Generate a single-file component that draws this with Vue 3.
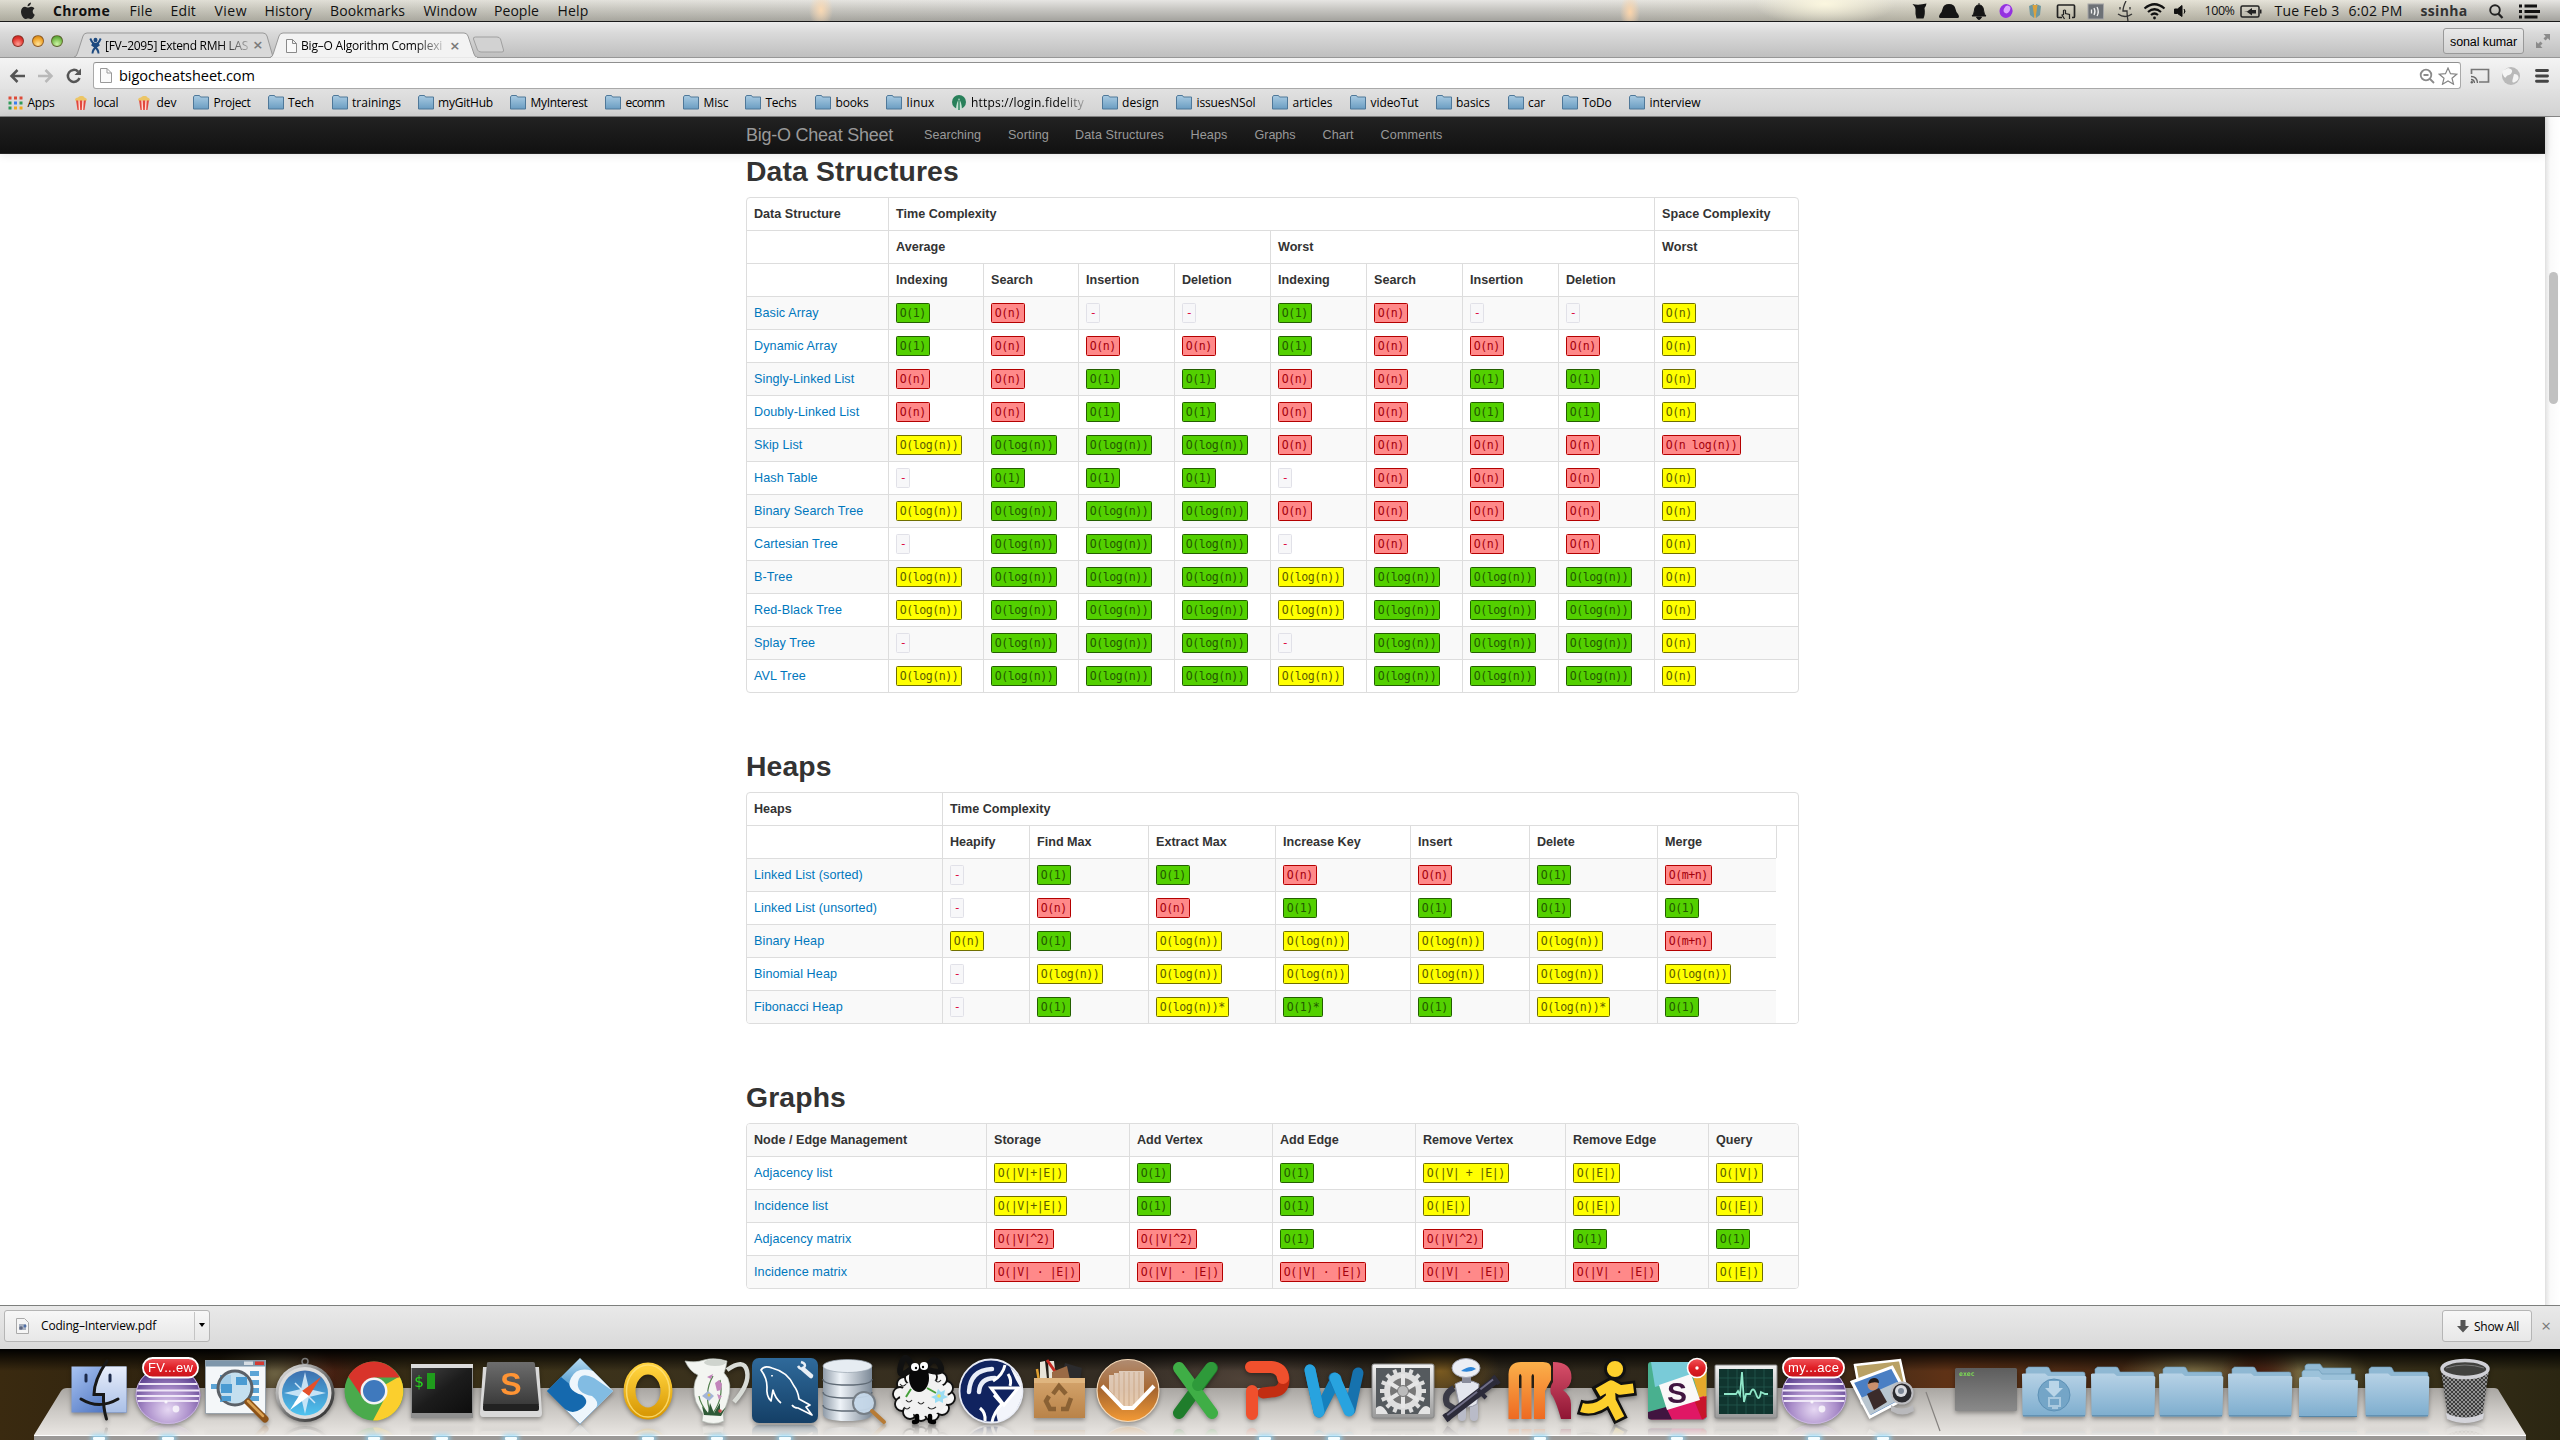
<script setup>
// Spreads letter spacing so that a label takes exactly the given width.
const vFit = {
  mounted(el, { value }) {
    if (!value) return
    const w = el.getBoundingClientRect().width
    el.style.letterSpacing = (value - w) / el.textContent.length + 'px'
  }
}

// Each item starts at x; its slot runs to the start of the next one.
const slots = (items, end) =>
  items.map(([kind, x, w, label], i) => ({
    kind, w, label, slot: (i + 1 < items.length ? items[i + 1][1] : end) - x
  }))

const menus = slots([
  ['b', 53.5, 57, 'Chrome'], ['', 130, 23, 'File'], ['', 171, 25.5, 'Edit'], ['', 215, 32.5, 'View'],
  ['', 265, 47.5, 'History'], ['', 330.5, 75, 'Bookmarks'], ['', 424, 53.5, 'Window'],
  ['', 494.5, 45, 'People'], ['', 558, 31, 'Help']
], 640)

const bookmarks = slots([
  ['apps', 8, 27, 'Apps'], ['pop', 73, 25, 'local'], ['pop', 136, 20, 'dev'],
  ['dir', 193, 37, 'Project'], ['dir', 267.5, 26, 'Tech'], ['dir', 331.5, 49, 'trainings'],
  ['dir', 417.5, 55, 'myGitHub'], ['dir', 510, 57, 'MyInterest'], ['dir', 605, 39, 'ecomm'],
  ['dir', 683, 25, 'Misc'], ['dir', 745, 31, 'Techs'], ['dir', 815, 33, 'books'],
  ['dir', 886, 28, 'linux'], ['fid', 950.5, 113, 'https://login.fidelity'], ['dir', 1101.5, 37, 'design'],
  ['dir', 1176, 59, 'issuesNSol'], ['dir', 1272, 40, 'articles'], ['dir', 1350, 48, 'videoTut'],
  ['dir', 1435.5, 34, 'basics'], ['dir', 1507.5, 17, 'car'], ['dir', 1562, 29, 'ToDo'],
  ['dir', 1629, 51, 'interview']
], 1710)

const links = slots([
  ['', 924, 57, 'Searching'], ['', 1008, 41, 'Sorting'], ['', 1075, 89, 'Data Structures'],
  ['', 1190.5, 37, 'Heaps'], ['', 1254.5, 41, 'Graphs'], ['', 1322.5, 31, 'Chart'], ['', 1380.5, 62, 'Comments']
], 1460)

const text = { g: 'O(1)', r: 'O(n)', l: 'O(log(n))', L: 'O(log(n))', y: 'O(n)' }
const tone = { g: 'green', r: 'red', l: 'green', L: 'yellow', y: 'yellow' }
const cell = c => {
  if (c === '-') return { tone: 'plain', text: '-' }
  if (c.length === 1) return { tone: tone[c], text: text[c] }
  return { tone: tone[c[0]], text: c.slice(1) }
}
const rows = list => list.map(([name, codes]) => ({ name, cells: codes.split(';').map(cell) }))

const structures = rows([
  ['Basic Array', 'g;r;-;-;g;r;-;-;y'],
  ['Dynamic Array', 'g;r;r;r;g;r;r;r;y'],
  ['Singly-Linked List', 'r;r;g;g;r;r;g;g;y'],
  ['Doubly-Linked List', 'r;r;g;g;r;r;g;g;y'],
  ['Skip List', 'L;l;l;l;r;r;r;r;rO(n log(n))'],
  ['Hash Table', '-;g;g;g;-;r;r;r;y'],
  ['Binary Search Tree', 'L;l;l;l;r;r;r;r;y'],
  ['Cartesian Tree', '-;l;l;l;-;r;r;r;y'],
  ['B-Tree', 'L;l;l;l;L;l;l;l;y'],
  ['Red-Black Tree', 'L;l;l;l;L;l;l;l;y'],
  ['Splay Tree', '-;l;l;l;-;l;l;l;y'],
  ['AVL Tree', 'L;l;l;l;L;l;l;l;y']
])
const heaps = rows([
  ['Linked List (sorted)', '-;g;g;r;r;g;rO(m+n)'],
  ['Linked List (unsorted)', '-;r;r;g;g;g;g'],
  ['Binary Heap', 'y;g;L;L;L;L;rO(m+n)'],
  ['Binomial Heap', '-;L;L;L;L;L;L'],
  ['Fibonacci Heap', '-;g;yO(log(n))*;gO(1)*;g;yO(log(n))*;g']
])
const graphs = rows([
  ['Adjacency list', 'yO(|V|+|E|);g;g;yO(|V| + |E|);yO(|E|);yO(|V|)'],
  ['Incidence list', 'yO(|V|+|E|);g;g;yO(|E|);yO(|E|);yO(|E|)'],
  ['Adjacency matrix', 'rO(|V|^2);rO(|V|^2);g;rO(|V|^2);g;g'],
  ['Incidence matrix', 'rO(|V| · |E|);rO(|V| · |E|);rO(|V| · |E|);rO(|V| · |E|);rO(|V| · |E|);yO(|E|)']
])
const colsA = [141, 95, 95, 96, 96, 96, 96, 96, 96, 144]
const colsB = [195, 87, 119, 127, 135, 119, 128, 119, 22]
const colsC = [239, 143, 143, 143, 150, 143, 90]
const ops = ['Indexing', 'Search', 'Insertion', 'Deletion']
const heapOps = ['Heapify', 'Find Max', 'Extract Max', 'Increase Key', 'Insert', 'Delete', 'Merge']
const graphOps = ['Node / Edge Management', 'Storage', 'Add Vertex', 'Add Edge', 'Remove Vertex', 'Remove Edge', 'Query']
const teeth = Array.from({ length: 16 }, (_, i) => i * 22.5)
const wool = [[14, 26], [22, 20], [10, 36], [12, 46], [20, 54], [31, 56], [42, 56], [52, 50], [58, 40], [56, 30], [50, 21], [40, 19]]
</script>

<template>
  <div class="desktop">
    <svg class="defs" width="0" height="0">
      <defs>
        <linearGradient id="gFinder" x1="0" y1="0" x2="1" y2="1"><stop offset="0" stop-color="#a9c4f2" /><stop offset="1" stop-color="#3a63b6" /></linearGradient>
        <linearGradient id="gFinder2" x1="0" y1="0" x2="0" y2="1"><stop offset="0" stop-color="#e8eefb" /><stop offset="1" stop-color="#a9bfe6" /></linearGradient>
        <radialGradient id="gEcl" cx=".5" cy=".75" r=".7"><stop offset="0" stop-color="#e6d8f3" /><stop offset=".5" stop-color="#a98cc9" /><stop offset="1" stop-color="#4f3585" /></radialGradient>
        <linearGradient id="gRed" x1="0" y1="0" x2="0" y2="1"><stop offset="0" stop-color="#f0565c" /><stop offset=".5" stop-color="#e01f26" /><stop offset="1" stop-color="#c8141a" /></linearGradient>
        <linearGradient id="gMetal" x1="0" y1="0" x2="1" y2="1"><stop offset="0" stop-color="#f6f6f6" /><stop offset=".5" stop-color="#777" /><stop offset="1" stop-color="#222" /></linearGradient>
        <linearGradient id="gSky" x1="0" y1="0" x2="0" y2="1"><stop offset="0" stop-color="#3d6fae" /><stop offset="1" stop-color="#4fc4f0" /></linearGradient>
        <linearGradient id="gBlack" x1="0" y1="0" x2="1" y2="1"><stop offset="0" stop-color="#454545" /><stop offset=".5" stop-color="#1c1c1c" /><stop offset="1" stop-color="#0d0d0d" /></linearGradient>
        <linearGradient id="gKey" x1="0" y1="0" x2="0" y2="1"><stop offset="0" stop-color="#6d6d6d" /><stop offset="1" stop-color="#3a3a3a" /></linearGradient>
        <linearGradient id="gDia" x1="0" y1="0" x2="0" y2="1"><stop offset="0" stop-color="#b8dcf2" /><stop offset=".55" stop-color="#2f86c4" /><stop offset="1" stop-color="#0b5b9f" /></linearGradient>
        <linearGradient id="gGold" x1="0" y1="0" x2="0" y2="1"><stop offset="0" stop-color="#ffd23c" /><stop offset="1" stop-color="#d99a06" /></linearGradient>
        <linearGradient id="gNavy" x1="0" y1="0" x2="0" y2="1"><stop offset="0" stop-color="#2f6a9b" /><stop offset="1" stop-color="#143f66" /></linearGradient>
        <linearGradient id="gDb" x1="0" y1="0" x2="1" y2="0"><stop offset="0" stop-color="#8f9ba8" /><stop offset=".35" stop-color="#eef3f8" /><stop offset="1" stop-color="#7c8997" /></linearGradient>
        <linearGradient id="gBag" x1="0" y1="0" x2="0" y2="1"><stop offset="0" stop-color="#d5a56d" /><stop offset="1" stop-color="#b98349" /></linearGradient>
        <linearGradient id="gV" x1="0" y1="0" x2="0" y2="1"><stop offset="0" stop-color="#b08c72" /><stop offset=".5" stop-color="#a8672f" /><stop offset="1" stop-color="#f39a35" /></linearGradient>
        <linearGradient id="gSteel" x1="0" y1="0" x2="0" y2="1"><stop offset="0" stop-color="#f2f2f2" /><stop offset="1" stop-color="#999" /></linearGradient>
        <linearGradient id="gOrange" x1="0" y1="0" x2="0" y2="1"><stop offset="0" stop-color="#fbb04a" /><stop offset="1" stop-color="#ee6a22" /></linearGradient>
        <linearGradient id="gWine" x1="0" y1="0" x2="0" y2="1"><stop offset="0" stop-color="#d8506a" /><stop offset="1" stop-color="#8f1534" /></linearGradient>
        <linearGradient id="gFolder" x1="0" y1="0" x2="0" y2="1"><stop offset="0" stop-color="#b7d2e6" /><stop offset="1" stop-color="#7dadce" /></linearGradient>
        <linearGradient id="gExec" x1="0" y1="0" x2="0" y2="1"><stop offset="0" stop-color="#5d5d5d" /><stop offset="1" stop-color="#8a8a8a" /></linearGradient>
        <linearGradient id="gMini" x1="0" y1="0" x2="0" y2="1"><stop offset="0" stop-color="#a9cbe2" /><stop offset="1" stop-color="#6b9dc2" /></linearGradient>
        <pattern id="pMesh" width="4" height="4" patternUnits="userSpaceOnUse"><rect width="4" height="4" fill="#3d3d3d" /><path d="M0 0L4 4M4 0L0 4" stroke="#a8a8a8" stroke-width=".8" /></pattern>
        <symbol id="eclipse" viewBox="0 0 66 66">
          <ellipse cx="33" cy="37" rx="32.5" ry="29" fill="url(#gEcl)" />
          <path d="M4 26H62M1.500 32.500H64.500M1.500 38H64.500M2.500 43H63.500" stroke="#efe7f7" stroke-width="1.800" />
          <ellipse cx="33" cy="37" rx="32" ry="28.500" fill="none" stroke="#cbb9e0" stroke-width="1" />
          <circle cx="41" cy="51" r="3.400" fill="#fff" opacity=".75" /><circle cx="31" cy="44" r="1.600" fill="#fff" opacity=".8" />
        </symbol>
        <symbol id="folder" viewBox="0 0 66 66">
          <path d="M5 16V11L7.500 9H26Q28 9 28.500 11L30 14H62Q64 14 64 16V20H3Z" fill="#8fb8d3" stroke="#6f9bb8" stroke-width=".6" />
          <path d="M1 17Q0.500 15.500 2.500 15.500H24L27 18H63.500Q65.500 18 65.300 19.500L64.500 56.500Q64.500 58.500 62.500 58.500H3.500Q1.500 58.500 1.500 56.500Z" fill="url(#gFolder)" />
          <path d="M2 57.800H64" stroke="#5787a8" stroke-width="1" />
        </symbol>
      </defs>
    </svg>

    <!-- system menu bar -->
    <header class="menubar">
      <svg class="apple" width="18" height="18" viewBox="0 0 18 18"><path d="M12 0.500c.2 1.800-1.600 3.900-3.500 3.800C8.300 2.500 10.200.7 12 .5zM15.800 12.700c-.8 2-2.300 4.300-3.900 4.300-1 0-1.500-.6-2.700-.6s-1.700.6-2.700.6C4.400 17 2 13.200 2 9.600 2 6.500 4 4.700 6 4.700c1.200 0 2.200.8 3 .8.800 0 1.900-.9 3.400-.8 1.300.1 2.400.7 3 1.700-2.500 1.500-2 5 .4 6.300z" fill="#222" /></svg>
      <span v-for="m in menus" :key="m.label" class="menu" :class="m.kind" :style="{ width: m.slot + 'px' }"><span v-fit="m.w">{{ m.label }}</span></span>
      <div class="status">
        <svg width="22" height="20" viewBox="0 0 22 20"><path d="M3.500 3q6 1.500 14-.5-.5 3-2 4.500 1 6-1 10.500H7.500Q6 13 6.500 8q0-2-3-5z" fill="#151515" /></svg>
        <svg width="36" height="20" viewBox="0 0 36 20"><path d="M9 17q-2-1 0-4 2-2 2.500-5Q12.500 3 18 3t6.500 5q.5 3 2.500 5 2 3 0 4Z" fill="#151515" /></svg>
        <svg width="25" height="20" viewBox="0 0 25 20"><path d="M5 15q2-1 2.500-6 .5-5 4.500-5t4.500 5q.5 5 2.500 6ZM9.500 16h5q-1 2.500-2.500 2.500T9.500 16ZM12 2v3" fill="#151515" stroke="#151515" /></svg>
        <svg width="28" height="20" viewBox="0 0 28 20"><ellipse cx="14" cy="10" rx="6.500" ry="7" transform="rotate(20 14 10)" fill="#9431e0" /><ellipse cx="15" cy="8.500" rx="3" ry="4" transform="rotate(30 15 8.500)" fill="#dca5ff" /></svg>
        <svg width="30" height="20" viewBox="0 0 30 20"><path d="M9 5l5-2v14l-4-3zM21 5l-5-2v14l4-3z" fill="#6f98a0" /><path d="M12.500 4h5L15.500 17h-1z" fill="#dba23e" /></svg>
        <svg width="30" height="20" viewBox="0 0 30 20"><path d="M12 16.500H8.500q-1 0-1-1V5q0-1 1-1h15q1 0 1 1v10.500q0 1-1 1H22" fill="none" stroke="#222" stroke-width="1.700" /><path d="M14.500 18l-2.500-4 1.500-.5V9.500q1.200-1 2 0v3l4 1v4.500" fill="none" stroke="#222" stroke-width="1.200" /></svg>
        <svg width="30" height="20" viewBox="0 0 30 20"><rect x="8" y="3" width="15.500" height="15" fill="#6d7176" stroke="#a6a6a6" /><path d="M11.500 8.500v4M14 7q2 3.500 0 7M17 6q2.500 4.500 0 9" fill="none" stroke="#f0f0f0" stroke-width="1.300" /></svg>
        <svg width="30" height="20" viewBox="0 0 30 20"><path d="M16 0q-3 6-3 10h4q0 6 1 10M10 6v2.500M20 6v2.500M8 13q7 5 14 0" fill="none" stroke="#333" stroke-width="1.300" /></svg>
        <svg width="30" height="20" viewBox="0 0 30 20"><path d="M4.500 7.500q10-8.500 20 0M8 11q6.500-5.500 13 0M11 14q3.500-3 7 0" fill="none" stroke="#111" stroke-width="2.200" /><circle cx="14.500" cy="17" r="1.400" fill="#111" /></svg>
        <svg width="30" height="20" viewBox="0 0 30 20"><path d="M4.500 8h3L12 4.500v11L7.500 12.500h-3zM14 8q2 2.300 0 4.500" fill="#111" stroke="#111" /></svg>
        <span class="small pct"><span v-fit="30">100%</span></span>
        <svg width="36" height="20" viewBox="0 0 36 20"><rect x="2" y="5" width="18" height="11" rx="1.500" fill="none" stroke="#222" stroke-width="1.500" /><path d="M21 8.500h1.500v4H21" fill="#222" /><path d="M5 10.500h3l5-3.500v2h4v3.500h-4v2l-5-3.500z" fill="#222" /></svg>
        <span class="date"><span v-fit="65">Tue Feb 3</span></span>
        <span class="time"><span v-fit="54">6:02 PM</span></span>
        <b class="user"><span v-fit="47">ssinha</span></b>
        <svg width="30" height="20" viewBox="0 0 30 20"><circle cx="9" cy="9" r="4.800" fill="none" stroke="#222" stroke-width="1.900" /><path d="M12.200 12.500L16.500 17" stroke="#222" stroke-width="2.300" /></svg>
        <svg width="24" height="20" viewBox="0 0 24 20"><path d="M3 5h3M3 10.500h3M3 16h3M8.500 5H21M8.500 10.500H24M8.500 16h13" stroke="#111" stroke-width="2.800" /></svg>
      </div>
    </header>

    <!-- browser window -->
    <section class="tabs">
      <i class="light red-l"></i><i class="light amber-l"></i><i class="light green-l"></i>
      <div class="tab first">
        <svg class="shape" width="200" height="26" viewBox="0 0 200 26"><path d="M0 25Q2.500 25 3.500 21L9 4Q10 1 13 1H189Q192 1 193 4L199 25" fill="#d9d9d9" stroke="#999" /></svg>
        <svg width="13" height="17" viewBox="0 0 15 17" preserveAspectRatio="none"><circle cx="7.500" cy="3" r="2.300" fill="#1d4a80" /><path d="M1.500 1.500Q4 7 7.500 7T13.500 1.500M3 7.500q4.500 2.500 9 0M4 16.500q0-4.500 7-8.500M11 16.500q0-4.500-7-8.500" fill="none" stroke="#1d4a80" stroke-width="2.200" /></svg>
        <span class="fade t1"><span v-fit="143">[FV–2095] Extend RMH LAS</span></span>
        <span class="x">×</span>
      </div>
      <div class="tab second">
        <svg class="shape" width="208" height="26" viewBox="0 0 208 26"><path d="M0 25.500Q2.500 25 3.500 21L9 4Q10 1 13 1H194Q197 1 198 4L204 22Q205 25.500 208 25.500" fill="#f3f3f3" stroke="#999" /><path d="M1 26H207" stroke="#f3f3f3" stroke-width="1.500" /></svg>
        <svg width="11" height="14" viewBox="0 0 11 14"><path d="M.5.500H6.500L10.500 4.500V13.500H.5zM6.500.500V4.500H10.500" fill="#fafafa" stroke="#8a8a8a" /></svg>
        <span class="fade t2"><span v-fit="141">Big–O Algorithm Complexi</span></span>
        <span class="x">×</span>
      </div>
      <svg class="newtab" width="34" height="18" viewBox="0 0 34 18"><path d="M1.500 3Q1 1 3.500 1H25Q27.500 1 28.500 3L31.500 14Q32 16 30 16H9Q6.500 16 5.500 14Z" fill="#d2d2d2" stroke="#a0a0a0" /></svg>
      <div class="tabs-right">
        <span class="profile"><span v-fit="67">sonal kumar</span></span>
        <svg width="16" height="16" viewBox="0 0 16 16"><path d="M8.500 1H15V7.500L12.800 5.300 10.500 7.500 8.500 5.500 10.700 3.200zM7.500 15H1V8.500L3.200 10.700 5.500 8.500 7.500 10.500 5.300 12.800z" fill="#8b8b8b" /></svg>
      </div>
    </section>

    <section class="toolbar">
      <div class="nav-buttons">
        <svg width="17" height="16" viewBox="0 0 17 16"><path d="M16 8H3M8.500 2L2.500 8l6 6" fill="none" stroke="#555" stroke-width="2.500" /></svg>
        <svg width="17" height="16" viewBox="0 0 17 16"><path d="M1 8H14M8.500 2L14.500 8l-6 6" fill="none" stroke="#b9b9b9" stroke-width="2.500" /></svg>
        <svg width="17" height="16" viewBox="0 0 17 16"><path d="M13 3.500A6 6 0 1 0 14.500 10" fill="none" stroke="#555" stroke-width="2.500" /><path d="M16 .5V7H9.500z" fill="#555" /></svg>
      </div>
      <div class="omnibox">
        <svg width="12" height="15" viewBox="0 0 12 15"><path d="M.5.500H7L11.500 5V14.500H.5zM7 .5V5H11.500" fill="#fafafa" stroke="#999" /></svg>
        <span class="url"><span v-fit="136">bigocheatsheet.com</span></span>
        <div class="omni-right">
          <svg width="16" height="16" viewBox="0 0 16 16"><circle cx="7" cy="7" r="5.300" fill="none" stroke="#8a8a8a" stroke-width="1.800" /><path d="M4.500 7h5M11 11l4 4" stroke="#8a8a8a" stroke-width="1.800" /></svg>
          <svg width="20" height="18" viewBox="0 0 20 18"><path d="M10 1l2.500 5.700 6.200.5-4.700 4 1.500 6L10 14l-5.500 3.200 1.500-6-4.700-4 6.200-.5z" fill="#fff" stroke="#858585" stroke-width="1.200" /></svg>
        </div>
      </div>
      <svg width="20" height="16" viewBox="0 0 20 16"><path d="M1.500 6V1.500H18.500V14H9" fill="none" stroke="#777" stroke-width="1.700" /><path d="M1 8.500q6 0 6.500 6.500M1 11.500q3.200 0 3.500 3.500" fill="none" stroke="#666" stroke-width="1.300" /><circle cx="1.800" cy="14.200" r="1.200" fill="#666" /></svg>
      <svg width="20" height="20" viewBox="0 0 20 20"><circle cx="10" cy="10" r="9" fill="#b9b9b9" /><path d="M7 2q5 1 4 4t-3 3-3 2-3-2 1-5zM13 8q4 0 4.500 3T14 16t-2-4zM7 13l3 4" fill="#f4f4f4" /></svg>
      <svg width="14" height="16" viewBox="0 0 14 16"><path d="M1.500 2.500h11M1.500 8h11M1.500 13.300h11" stroke="#444" stroke-width="2.900" stroke-linecap="round" /></svg>
    </section>

    <nav class="bookmarks">
      <span v-for="b in bookmarks" :key="b.label" class="bm" :style="{ width: b.slot + 'px' }">
        <svg v-if="b.kind === 'dir'" width="16" height="15" viewBox="0 0 16 15"><path d="M.5 14V2L1.500.500H6.500L7.500 2H15.500V14Z" fill="url(#gMini)" stroke="#4f7899" /></svg>
        <svg v-else-if="b.kind === 'apps'" width="15" height="14" viewBox="0 0 15 14"><path d="M.5 2h14" stroke="#dd4b39" stroke-width="3" stroke-dasharray="3 2.500" /><path d="M.5 7h3M11.500 7h3" stroke="#2f9a58" stroke-width="3" /><path d="M6 7h3" stroke="#3b7ded" stroke-width="3" /><path d="M.5 12h3" stroke="#2f9a58" stroke-width="3" /><path d="M6 12h8.500" stroke="#f2a81d" stroke-width="3" stroke-dasharray="3 2.500" /></svg>
        <svg v-else-if="b.kind === 'pop'" width="16" height="15" viewBox="0 0 16 15"><path d="M3 5H13L11.500 15h-7z" fill="#e2473c" /><path d="M6 5l.5 10M10 5l-.5 10" stroke="#ffdcd5" stroke-width="1.400" /><path d="M2 5.500q0-3 3-3Q6 .5 8.500 1 11 .5 11.500 2.500q2.500.5 2.500 3z" fill="#ecc565" /></svg>
        <svg v-else width="16" height="15" viewBox="0 0 16 15"><circle cx="8" cy="7" r="7" fill="#28805a" /><path d="M5 15q0-4 1-7l2-5 2 5q1 3 1 7z" fill="#c7e3d4" /><path d="M8 5v10" stroke="#28805a" stroke-width="1.400" /></svg>
        <span :class="{ faded: b.kind === 'fid' }" v-fit="b.w">{{ b.label }}</span>
      </span>
    </nav>

    <!-- page -->
    <div class="viewport">
      <div class="page">
        <div class="navbar">
          <span class="brand"><span v-fit="147">Big-O Cheat Sheet</span></span>
          <a v-for="l in links" :key="l.label" :style="{ width: l.slot + 'px' }"><span v-fit="l.w">{{ l.label }}</span></a>
        </div>
        <main>
          <h1>Data Structures</h1>
          <div class="frame">
            <table>
              <colgroup><col v-for="(c, i) in colsA" :key="i" :style="{ width: c + 'px' }"></colgroup>
              <tbody>
                <tr><th>Data Structure</th><th colspan="8">Time Complexity</th><th>Space Complexity</th></tr>
                <tr><th></th><th colspan="4">Average</th><th colspan="4">Worst</th><th>Worst</th></tr>
                <tr><th></th><th v-for="o in ops" :key="o">{{ o }}</th><th v-for="o in ops" :key="o + 'w'">{{ o }}</th><th></th></tr>
                <tr v-for="(r, i) in structures" :key="r.name" :class="{ odd: i % 2 === 0 }">
                  <td><a>{{ r.name }}</a></td>
                  <td v-for="(c, j) in r.cells" :key="j"><code :class="c.tone">{{ c.text }}</code></td>
                </tr>
              </tbody>
            </table>
          </div>
          <h1>Heaps</h1>
          <div class="frame">
            <table>
              <colgroup><col v-for="(c, i) in colsB" :key="i" :style="{ width: c + 'px' }"></colgroup>
              <tbody>
                <tr><th>Heaps</th><th colspan="8">Time Complexity</th></tr>
                <tr><th></th><th v-for="o in heapOps" :key="o">{{ o }}</th><th></th></tr>
                <tr v-for="(r, i) in heaps" :key="r.name" :class="{ odd: i % 2 === 0 }">
                  <td><a>{{ r.name }}</a></td>
                  <td v-for="(c, j) in r.cells" :key="j"><code :class="c.tone">{{ c.text }}</code></td>
                  <td class="void"></td>
                </tr>
              </tbody>
            </table>
          </div>
          <h1>Graphs</h1>
          <div class="frame">
            <table>
              <colgroup><col v-for="(c, i) in colsC" :key="i" :style="{ width: c + 'px' }"></colgroup>
              <tbody>
                <tr class="odd"><th v-for="o in graphOps" :key="o">{{ o }}</th></tr>
                <tr v-for="(r, i) in graphs" :key="r.name" :class="{ odd: i % 2 === 1 }">
                  <td><a>{{ r.name }}</a></td>
                  <td v-for="(c, j) in r.cells" :key="j"><code :class="c.tone">{{ c.text }}</code></td>
                </tr>
              </tbody>
            </table>
          </div>
        </main>
      </div>
      <div class="scrollbar"><i></i></div>
    </div>

    <section class="downloads">
      <div class="dl">
        <svg width="13" height="16" viewBox="0 0 13 16"><path d="M.5.500H8.500L12.500 4.500V15.500H.5z" fill="#f5f5f5" stroke="#aaa" /><path d="M3 6h7v6H3z" fill="#aab2c0" /><circle cx="5" cy="10" r="1.800" fill="#5d6680" /><circle cx="9" cy="8" r="1.500" fill="#5070a8" /></svg>
        <span class="name"><span v-fit="115">Coding–Interview.pdf</span></span>
        <i class="caret"></i>
      </div>
      <div class="showall">
        <svg width="12" height="13" viewBox="0 0 12 13"><path d="M3.500 0h5v6H12L6 12.500 0 6h3.500z" fill="#555" /></svg>
        <span v-fit="45">Show All</span>
      </div>
      <span class="dl-x">×</span>
    </section>

    <!-- dock -->
    <footer class="dock">
      <svg class="shelf" width="2560" height="52" viewBox="0 0 2560 52">
        <defs><linearGradient id="gShelf" x1="0" y1="0" x2="0" y2="1"><stop offset="0" stop-color="#a9a6a2" /><stop offset=".5" stop-color="#cdcac6" /><stop offset="1" stop-color="#e9e6e2" /></linearGradient></defs>
        <path d="M67 0H2494Q2498 0 2499 3L2526 47H34L61 3Q63 0 67 0Z" fill="url(#gShelf)" />
        <path d="M34 48H2526V52H34Z" fill="#9b9997" /><path d="M34 47.500H2526" stroke="#fff" stroke-width="1.200" />
        <path d="M1926 4L1940 43" stroke="#85827f" stroke-width="1.200" />
      </svg>
      <div class="row">
        <div class="tile on"><svg viewBox="0 0 66 66"><rect x="5.500" y="8.500" width="55" height="46" fill="url(#gFinder)" /><path d="M39 8.500H60.500V54.500H38Q37 47 37 36H28Q30 20 39 8.500Z" fill="url(#gFinder2)" /><path d="M20 17v6M44 17v6" stroke="#1c2a4a" stroke-width="3" stroke-linecap="round" /><path d="M41 3Q28 22 28 36.500H37.500Q37 50 40.500 61M15 41Q33 52 52 41" fill="none" stroke="#181818" stroke-width="3" stroke-linecap="round" /></svg></div>
        <div class="tile on"><svg viewBox="0 0 66 66"><use href="#eclipse" /><rect x="8" y="0" width="55" height="19.500" rx="9.500" fill="url(#gRed)" stroke="#fff" stroke-width="1.800" /><text x="35.500" y="14" text-anchor="middle" font-size="13" textLength="45" fill="#fff">FV...ew</text></svg></div>
        <div class="tile"><svg viewBox="0 0 66 66"><rect x="1.500" y="2.500" width="60" height="53" fill="#f4f7f9" stroke="#9aa3ab" /><rect x="1.500" y="2.500" width="60" height="6" fill="#7f97ab" /><rect x="51" y="3.500" width="9" height="3.500" fill="#d43a33" /><rect x="40" y="3.500" width="9" height="3.500" fill="#d6dde3" /><path d="M46 13h9v5h-9zM46 22h9v5h-9zM46 30h9v5h-9zM46 38h9v5h-9zM7 26h10v5H7zM16 17h11v9H16zM16 38h11v6H16z" fill="#5ba4d6" /><circle cx="31" cy="30" r="17" fill="#b8d8ec" fill-opacity=".8" stroke="#5b6168" stroke-width="3" /><path d="M17 26h11v9H17zM32 19h11v8H32zM17 38h10v5H18z" fill="#4a9bd2" /><path d="M44 44L61 61" stroke="#8c5217" stroke-width="7" stroke-linecap="round" /><path d="M44 43L59 58" stroke="#dba253" stroke-width="2.500" stroke-linecap="round" /></svg></div>
        <div class="tile"><svg viewBox="0 0 66 66"><circle cx="33" cy="3.500" r="3" fill="none" stroke="#777" stroke-width="1.500" /><ellipse cx="33" cy="35" rx="29.500" ry="29" fill="url(#gMetal)" /><ellipse cx="33" cy="35" rx="26.500" ry="26" fill="#dcdcdc" /><ellipse cx="33" cy="35" rx="23" ry="22.500" fill="url(#gSky)" /><path d="M33 14l4 17 17 4-17 4-4 17-4-17-17-4 17-4z" fill="#dceefb" opacity=".85" /><path d="M23 25l20 20M43 25L23 45" stroke="#cfe6f8" stroke-width="1.500" /><path d="M49 19L37 38l-7-5z" fill="#e5502a" /><path d="M18 52L30 33l7 5z" fill="#fff" /></svg></div>
        <div class="tile on"><svg viewBox="0 0 66 66"><circle cx="33" cy="33" r="29.500" fill="#4aaa4c" /><path d="M33 33L58.500 18.500A29.500 29.500 0 0 1 32 62.500L45 38z" fill="#fbcf2d" /><path d="M33 3.500A29.500 29.500 0 0 1 58.700 19.500H33L20.500 38 7.300 18.500A29.500 29.500 0 0 1 33 3.500z" fill="#d8342b" /><circle cx="33" cy="33" r="13.500" fill="#f4f4f4" /><circle cx="33" cy="33" r="11" fill="#3f79bd" /></svg></div>
        <div class="tile on"><svg viewBox="0 0 66 66"><rect x="2" y="6" width="62" height="54" fill="#8f8f8f" /><rect x="2" y="6" width="62" height="4" fill="#dcdcdc" /><rect x="3" y="10" width="60" height="45" fill="url(#gBlack)" /><text x="5" y="29" font-size="16" fill="#27d31f" class="mono">$</text><rect x="18" y="15" width="8" height="16" fill="#1f9c1c" /></svg></div>
        <div class="tile on"><svg viewBox="0 0 66 66"><path d="M5 9L2 55Q2 59 5 59H61Q64 59 64 55L61 9z" fill="#d9d9d9" /><path d="M9 5Q9 4 11 4H55Q57 4 57 6L61 47H5z" fill="url(#gKey)" /><rect x="5" y="46" width="56" height="7" rx="2" fill="#222" /><text x="33" y="37" text-anchor="middle" font-size="32" font-weight="bold" fill="#ff9434">S</text></svg></div>
        <div class="tile"><svg viewBox="0 0 66 66"><path d="M33 0L66 33 33 66 0 33z" fill="url(#gDia)" /><path d="M50 49L33 66 0 33 14 19" fill="#1569ae" /><path d="M33 66L66 33 46 13Q30 8 24 20T35 37Q44 44 34 51T15 48z" fill="#eef6fc" /><path d="M47 20Q33 13 31 24T45 38Q53 44 49 50L66 33z" fill="#82bce3" /></svg></div>
        <div class="tile on"><svg viewBox="0 0 66 66"><ellipse cx="33" cy="33" rx="18.500" ry="22.500" fill="none" stroke="url(#gGold)" stroke-width="12" /><ellipse cx="33" cy="33" rx="21.500" ry="26" fill="none" stroke="#ffe27a" stroke-width="1.500" opacity=".8" /></svg></div>
        <div class="tile on"><svg viewBox="0 0 66 66"><path d="M43 12Q60 0 63 13T50 44" fill="none" stroke="#d9dcd7" stroke-width="4.500" /><path d="M1 3Q12 5 20 2 30-1 43 3 42 10 40 15 50 24 43 45 41 50 39 56L40 63Q30 68 18 63L19 56Q15 50 12 44 7 28 14 17 6 14 1 3z" fill="#f3f5f1" stroke="#b5bbb4" stroke-width=".7" /><ellipse cx="31" cy="4.500" rx="11" ry="3.500" fill="#cfd4ce" /><path d="M27 57Q19 35 29 18M29 55Q40 40 36 22M24 56Q16 45 15 38" fill="none" stroke="#4f7d4a" stroke-width="1.200" /><path d="M20 57l-2-9 6 7 2-10 4 10 6-10v10l6-6-5 9z" fill="#2f5a37" /><path d="M31 25l4-3 3 4-1 6-4 1zM23 19l6-3-2 5z" fill="#c284bb" /><path d="M18 38l6-5 6 5-5 5z" fill="#a3b5d8" /><path d="M33 36l5 2-3 4z" fill="#ca8fbf" /><circle cx="25" cy="37" r="1.500" fill="#e0c34d" /><circle cx="36" cy="53" r="1.800" fill="#c34a4a" /></svg></div>
        <div class="tile on"><svg viewBox="0 0 66 66"><rect x="0" y="0" width="66" height="65" rx="7" fill="url(#gNavy)" /><path d="M29 45Q23 40 21 32L19 43Q14 38 15 29 15 20 9 12 12 7 20 10 36 14 42 28 46 33 47 41L58 47 54 49 60 57 46 50Q42 50 40 47M20 17v1.500" fill="none" stroke="#fff" stroke-width="1.700" stroke-linejoin="round" /><path d="M51 11l8 7" stroke="#e8eff6" stroke-width="4.500" stroke-linecap="round" /><path d="M46 8q3 5 6 1.500T49 4" fill="none" stroke="#e8eff6" stroke-width="2.500" /></svg></div>
        <div class="tile"><svg viewBox="0 0 66 66"><path d="M2 8V56Q2 63 26 63T51 56V8z" fill="url(#gDb)" /><ellipse cx="26.500" cy="8" rx="24.500" ry="6.500" fill="#e6ecf2" stroke="#9aa5b0" stroke-width=".7" /><path d="M2 21q0 6 24.500 6T51 21M2 34q0 6 24.500 6T51 34M2 47q0 6 24.500 6T51 47" fill="none" stroke="#5f6a75" stroke-width="1.500" /><circle cx="43" cy="45" r="11" fill="#c9dced" fill-opacity=".9" stroke="#777f87" stroke-width="2" /><path d="M51 53L63 64" stroke="#b77b35" stroke-width="4" stroke-linecap="round" /></svg></div>
        <div class="tile"><svg viewBox="0 0 66 66"><circle v-for="(p, i) in wool" :key="i" :cx="p[0]" :cy="p[1]" r="7" fill="#f6f6f6" stroke="#111" stroke-width="1.800" /><ellipse cx="34" cy="39" rx="24" ry="19" fill="#f1f1f1" /><path d="M27 58v5q0 1-3 1M40 58v5q0 1 4 1" fill="none" stroke="#000" stroke-width="4.500" stroke-linecap="round" /><path d="M20 12Q7 22 11 7T22 8M37 8Q45-3 50 7T38 12" fill="none" stroke="#111" stroke-width="6" stroke-linecap="round" /><ellipse cx="29" cy="20" rx="10" ry="14" fill="#080808" /><circle cx="25" cy="9" r="4" fill="#fff" /><circle cx="34" cy="8" r="4" fill="#fff" /><circle cx="26" cy="10" r="1.200" /><circle cx="33" cy="9" r="1.200" /><path d="M16 39q3-5 5-8M37 30l9 5" stroke="#45a03a" stroke-width="2" fill="none" /><path d="M48 31l3 3 4-2-1 5 4 2-5 2v4l-4-2-4 2v-4l-4-2 5-2z" fill="#9bdcf3" /><circle cx="49" cy="38" r="1.800" fill="#f3e35a" /><path d="M10 26q3 4 6 0M45 22q3 4 6 0M16 42q3 4 6 0M28 44q3 4 6 0M38 49q3 4 8 0M14 49q3 4 6 0" fill="none" stroke="#333" stroke-width="1.200" /></svg></div>
        <div class="tile"><svg viewBox="0 0 66 66"><ellipse cx="33" cy="33" rx="31.500" ry="31.500" fill="#10235f" stroke="#e8ebf5" stroke-width="1.800" /><path d="M52 9Q66 20 64 37 60 58 40 64L38 55Q41 50 43 47L52 29H62L58 22Z" fill="#f3f5fb" /><path d="M33 30H60L46 47Z" fill="#10235f" stroke="#fff" stroke-width="3" /><path d="M11 34Q12 12 34 11M21 34Q22 20 37 20" fill="none" stroke="#e8edf8" stroke-width="4.500" stroke-linecap="round" /><path d="M47 7Q45 17 35 23M50 16Q54 22 52 28M36 37L44 46Q36 54 34 64M22 50Q28 55 27 63" fill="none" stroke="#fff" stroke-width="3" /></svg></div>
        <div class="tile"><svg viewBox="0 0 66 66"><path d="M13 4l5-1 2 18h-7zM21 3h6l2 18h-7z" fill="#e9e4d8" /><path d="M20 2l14 20" stroke="#c4271f" stroke-width="3" /><path d="M38 5l17 5-2 13-19-4z" fill="#2b2b2d" /><path d="M25 14l15-6 3 14H25z" fill="#9a6a45" /><path d="M10 11l2 12" stroke="#e3a231" stroke-width="2.500" /><rect x="7" y="20" width="51" height="40" fill="url(#gBag)" /><path d="M7 20h51v5H7z" fill="#dfb57f" /><path d="M26 36l6-8 7 8M44 40l-4 11h-6M29 51h-6l-4-8 3-5" fill="none" stroke="#8a6134" stroke-width="4.500" /></svg></div>
        <div class="tile"><svg viewBox="0 0 66 66"><ellipse cx="33" cy="32.500" rx="31" ry="31" fill="url(#gV)" stroke="#f4d9b8" stroke-width="1.200" /><path d="M14 17H19V15H24V13H49V36L38 48H29L14 32z" fill="#f2e9df" fill-opacity=".72" /><path d="M19 17v20M24 15v28M29 14v34M34 14v34M39 14v32M44 14v28" stroke="#c9a585" stroke-width=".9" /><path d="M7 28L28 50H38L59 28" fill="none" stroke="#fff" stroke-width="4" /></svg></div>
        <div class="tile"><svg viewBox="0 0 66 66"><path d="M48 10L15 55" stroke="#1f7d2b" stroke-width="12" stroke-linecap="round" /><path d="M15 10L48 55" stroke="#3fae46" stroke-width="12" stroke-linecap="round" /><path d="M47 10L34 27" stroke="#2e9a3a" stroke-width="12" stroke-linecap="round" /></svg></div>
        <div class="tile on"><svg viewBox="0 0 66 66"><path d="M18 9H38Q51 10 51 22T38 34L30 35" fill="none" stroke="#c22d12" stroke-width="11" stroke-linecap="round" stroke-linejoin="round" /><path d="M18 9H38Q49 10 50 20M19 56V33" fill="none" stroke="#f0502d" stroke-width="12" stroke-linecap="round" /></svg></div>
        <div class="tile on"><svg viewBox="0 0 66 66"><path d="M9 12L18 54 35 21" fill="none" stroke="#1580bd" stroke-width="11" stroke-linecap="round" stroke-linejoin="round" /><path d="M33 20L49 52 57 15" fill="none" stroke="#1672ae" stroke-width="11" stroke-linecap="round" stroke-linejoin="round" /><path d="M9 12L18 54M34 20L48 53" stroke="#28a3df" stroke-width="11" stroke-linecap="round" /></svg></div>
        <div class="tile"><svg viewBox="0 0 66 66"><rect x="2" y="6" width="62" height="54" rx="2" fill="url(#gSteel)" stroke="#888" /><rect x="6" y="10" width="54" height="46" fill="#555a5e" /><g fill="#dedede"><circle cx="33" cy="33" r="19" /><rect v-for="t in teeth" :key="t" x="31" y="10" width="4" height="8" :transform="'rotate(' + t + ' 33 33)'" /></g><circle cx="33" cy="33" r="13" fill="#777" /><path d="M33 16v34M18 24l30 18M18 42l30-18" stroke="#e6e6e6" stroke-width="4" /><circle cx="33" cy="33" r="5.500" fill="#bbb" stroke="#777" /><path d="M6 50q6-6 12 6H6zM60 50q-6-6-12 6H60z" fill="#e4e4e4" /></svg></div>
        <div class="tile"><svg viewBox="0 0 66 66"><path d="M16 30Q5 36 9 46L17 51" fill="none" stroke="#3a3a46" stroke-width="6" stroke-linejoin="round" /><path d="M24 48v11M36 48v11" stroke="#b9bbc8" stroke-width="8" stroke-linecap="round" /><path d="M17 26Q29 19 41 26L39 46Q30 52 21 46z" fill="#e4e6ee" stroke="#9a9cab" /><path d="M24 19h9v6h-9z" fill="#8a8c9c" /><ellipse cx="28" cy="10" rx="14" ry="9.500" fill="#eceef4" stroke="#a0a3b0" /><path d="M23 13q9 2 15-2-5-5-15 2z" fill="#2f86d8" /><path d="M8 60L59 21" stroke="#2c2b3a" stroke-width="8" /><path d="M8 58L57 20" stroke="#6f6d86" stroke-width="2" /><path d="M40 32l8 8M6 56l5 7M55 18l6 8" stroke="#2c2b3a" stroke-width="4" /></svg></div>
        <div class="tile on"><svg viewBox="0 0 66 66"><path d="M1.500 61V16Q2 4 14 4H36Q45 4 44 12V22L38 33V61H27V18Q26 14 24.500 18V61H14.500V18Q13 14 12 18V61z" fill="url(#gOrange)" /><path d="M46 4Q65 4 64.500 20 64 29 56 32 64 38 64 46T64 61H54Q48 40 44 36 42 30 46 24z" fill="url(#gWine)" /></svg></div>
        <div class="tile"><svg viewBox="0 0 66 66"><g stroke-linejoin="round" fill="none"><path d="M60 30L44 32 35 27 19 36M34 27L35 43 45 63M34 40Q20 54 3 49" stroke="#111" stroke-width="15" /><path d="M57.500 30.300L44 32 35 27 22 34.500M34 27L35 43 44 60.500M34 40Q20 54 5.500 49.500" stroke="#fdd02c" stroke-width="9.500" /></g><ellipse cx="39" cy="11" rx="9.500" ry="9.500" fill="#fdd02c" stroke="#111" stroke-width="2.800" /></svg></div>
        <div class="tile on"><svg viewBox="0 0 66 66"><rect x="4" y="4" width="58.500" height="57.500" rx="3" fill="#49b08f" /><path d="M7 4H45L50 17 11 29z" fill="#79cbd8" /><path d="M45 4H62.500V42L56 43z" fill="#e5a92c" /><path d="M4 56L60 38 62.500 59 59.500 61.500H7z" fill="#e01765" /><path d="M4 54L22 49 28 61.500H7Q4 61.500 4 59z" fill="#411540" /><path d="M50 42L62.500 38V59L58 61.500z" fill="#c8152b" /><path d="M15 27L47 16 56 42 23 52z" fill="#faf8f8" /><text x="33" y="45" text-anchor="middle" font-size="30" font-weight="bold" fill="#411540">S</text><circle cx="53" cy="10" r="9.500" fill="url(#gRed)" stroke="#fff" stroke-width="1.600" /><circle cx="53" cy="10" r="1.700" fill="#fff" /></svg></div>
        <div class="tile"><svg viewBox="0 0 66 66"><rect x="2" y="7" width="62" height="53" rx="1" fill="url(#gSteel)" stroke="#888" /><rect x="6" y="11" width="54" height="45" fill="#10352f" /><path d="M6 20h54M6 29h54M6 38h54M6 47h54M15 11v45M24 11v45M33 11v45M42 11v45M51 11v45" stroke="#25594f" stroke-width=".8" /><path d="M11 36H23l2-3 2 4 2-23 2 30 2-8h4q3-9 6 0t5-2l4 2h3" fill="none" stroke="#8fe6c8" stroke-width="1.800" /></svg></div>
        <div class="tile on"><svg viewBox="0 0 66 66"><use href="#eclipse" /><rect x="2" y="0" width="61" height="19.500" rx="9.500" fill="url(#gRed)" stroke="#fff" stroke-width="1.800" /><text x="32.500" y="14" text-anchor="middle" font-size="13" textLength="51" fill="#fff">my...ace</text></svg></div>
        <div class="tile on"><svg viewBox="0 0 66 66"><path d="M5 7L50 2 57 34 12 45z" fill="#b9a165" stroke="#fff" stroke-width="2.500" /><path d="M2 24L42 9 58 39 20 59z" fill="#4a7fc4" stroke="#fff" stroke-width="3" /><path d="M11 40l36-16 9 14-36 19z" fill="#b8c5cf" /><circle cx="23" cy="27" r="5.500" fill="#c98f6c" /><path d="M18 26q1-6 6-6t5 5q-5-2-11 1z" fill="#221a18" /><path d="M17 36l12-6 8 14-13 8z" fill="#3b2b2a" /><path d="M41 47q10 7 22 0l1 6q-12 7-23 0z" fill="#b9b9bc" /><circle cx="52" cy="35" r="10.500" fill="#2a2a2e" stroke="#bcbcc0" stroke-width="2" /><circle cx="51" cy="33" r="6" fill="#d9dbe0" /><circle cx="51" cy="33" r="3" fill="#7c8796" /></svg></div>
      </div>
      <div class="row right">
        <div class="tile"><svg viewBox="0 0 66 66"><rect x="2" y="10" width="62" height="43" rx="1.500" fill="url(#gExec)" /><text x="6" y="18" font-size="6.500" font-weight="bold" fill="#7ddc55" class="mono">exec</text></svg></div>
        <div class="tile"><svg viewBox="0 0 66 66"><use href="#folder" /><circle cx="33" cy="37" r="16" fill="#74a5c7" stroke="#5d91b6" /><path d="M28 23h10v7h4l-9 9-9-9h4z" fill="#b9d5e8" /><path d="M28 40h11v8H28zM31 50h6" fill="none" stroke="#a9c9df" stroke-width="2" /></svg></div>
        <div class="tile"><svg viewBox="0 0 66 66"><use href="#folder" /></svg></div>
        <div class="tile"><svg viewBox="0 0 66 66"><use href="#folder" /></svg></div>
        <div class="tile"><svg viewBox="0 0 66 66"><use href="#folder" /></svg></div>
        <div class="tile"><svg viewBox="0 0 66 66"><path d="M10 20V8Q11 6 13 6H25L28 10H56V22H10z" fill="#92bad4" stroke="#6f9bb8" stroke-width=".7" /><path d="M7 22V14Q8 12 10 12H24L27 16H60V26H7z" fill="#9cc2da" stroke="#6f9bb8" stroke-width=".7" /><path d="M4 21Q4 19 6 19H24L27 22H61Q63 22 63 24L62 57Q62 59 60 59H6Q4 59 4 57z" fill="url(#gFolder)" /><path d="M4 58.500H62" stroke="#5787a8" /></svg></div>
        <div class="tile"><svg viewBox="0 0 66 66"><use href="#folder" /></svg></div>
        <div class="tile"><svg viewBox="0 0 66 66"><path d="M9 12L16 60Q33 68 50 60L57 12z" fill="url(#pMesh)" /><path d="M14 55Q33 64 52 55L51 61Q33 69 15 61z" fill="#d4d4da" /><ellipse cx="33" cy="11" rx="23" ry="8.500" fill="#41413f" stroke="#d0d0d6" stroke-width="3.500" /><path d="M14 10Q33 4 52 10" stroke="#777" fill="none" /></svg></div>
      </div>
    </footer>
  </div>
</template>

<style>
html, body { margin: 0; overflow: hidden; background: #000; }
</style>

<style scoped>
.desktop { width: 2560px; height: 1440px; display: flex; flex-direction: column; overflow: hidden; background: #fff; color: #000; font-family: "Open Sans", "Noto Sans", sans-serif; font-size: 12px; }
.desktop * { box-sizing: border-box; }
.defs { position: absolute; }
svg { flex: none; display: block; }
span, b, a { white-space: pre; flex: none; }

.menubar { height: 22px; flex: none; display: flex; align-items: center; padding-left: 19px; border-bottom: 1px solid #191919; font-size: 14px; line-height: 20px; color: #111;
  background:
    radial-gradient(ellipse 12px 18px at 821px 10px, rgba(255, 219, 178, .9), transparent),
    radial-gradient(ellipse 10px 18px at 1630px 12px, rgba(255, 214, 170, .95), transparent),
    radial-gradient(ellipse 70px 22px at 1825px 4px, rgba(255, 250, 225, .9), transparent),
    linear-gradient(117deg, transparent 48%, transparent 52%),
    linear-gradient(90deg, rgba(200, 196, 160, .25), transparent 40%, transparent 60%, rgba(225, 215, 170, .3) 80%, transparent),
    linear-gradient(#e6e5e2, #cac9c5 40%, #a3a29d); }
.apple { margin-right: 16px; }
.menu { display: block; }
.menu.b { font-weight: bold; }
.status { margin-left: auto; display: flex; align-items: center; height: 20px; width: 651px; }
.small { font-size: 12.500px; }
.pct { width: 34px; margin-left: 4.500px; }
.date { width: 74px; }
.time { width: 72px; }
.user { width: 65px; color: #333; }

.tabs { height: 36px; flex: none; display: flex; align-items: flex-end; position: relative; background: linear-gradient(#ececec, #dadada 30%, #bfbfbf); border-bottom: 1px solid #979797; padding-left: 12px; }
.light { width: 12px; height: 12px; border-radius: 50%; margin: 0 7.700px 10px 0; border: 1px solid rgba(80, 40, 30, .55); }
.red-l { background: radial-gradient(circle at 50% 80%, #ff9d93, #e2362f 60%, #b5201c); }
.amber-l { background: radial-gradient(circle at 50% 80%, #ffe39a, #efa328 60%, #bb7512); }
.green-l { background: radial-gradient(circle at 50% 80%, #cdf5a5, #76bb4a 60%, #3f8425); }
.tab { position: relative; height: 25px; display: flex; align-items: center; flex: none; padding-top: 1px; }
.tab > * { position: relative; }
.tab .shape { position: absolute; left: 0; top: 0; }
.first { width: 196px; margin-left: 3px; padding-left: 15px; }
.second { width: 204px; padding-left: 16px; height: 26px; margin-bottom: -1px; z-index: 1; }
.fade { -webkit-mask: linear-gradient(90deg, #000 80%, rgba(0, 0, 0, .2)); }
.t1 { width: 144px; margin: 0 4px 0 3px; }
.t2 { width: 142px; margin: 0 7px 0 4px; }
.x { color: #7b7b7b; font-size: 17px; line-height: 16px; font-weight: 600; }
.newtab { margin: 0 0 3px -2px; }
.tabs-right { margin-left: auto; display: flex; align-items: center; gap: 11px; padding: 0 9px 3.500px 0; }
.profile { width: 81px; height: 26px; border: 1px solid #999; border-radius: 3px; background: linear-gradient(#e9e9e9, #d2d2d2); padding: 0 6px; line-height: 26px; font-family: "Liberation Sans", sans-serif; font-size: 12.500px; }

.toolbar { height: 31px; flex: none; display: flex; align-items: center; background: linear-gradient(#f4f4f4, #e2e2e2); padding: 4px 11px 0 9px; }
.nav-buttons { display: flex; gap: 11px; width: 84px; }
.omnibox { width: 2369px; height: 27px; background: #fff; border: 1px solid #a9a9a9; border-top-color: #8f8f8f; border-radius: 3px; display: flex; align-items: center; padding: 0 2px 0 6px; margin-right: 9px; }
.url { font-size: 14.500px; margin-left: 7px; }
.omni-right { margin-left: auto; display: flex; gap: 3px; align-items: center; }
.toolbar > svg:nth-of-type(1) { margin-right: 11px; }
.toolbar > svg:nth-of-type(2) { margin-right: 14px; }

.bookmarks { height: 28px; flex: none; display: flex; align-items: center; padding-left: 8px; background: linear-gradient(#e1e1e1, #d2d2d2); border-bottom: 1px solid #858585; }
.bm { display: flex; align-items: center; gap: 4.500px; height: 26px; }
.faded { -webkit-mask: linear-gradient(90deg, #000 78%, rgba(0, 0, 0, .25)); }

.viewport { height: 1188px; flex: none; display: flex; }
.page { width: 2545px; flex: none; font-family: "Liberation Sans", Arial, sans-serif; font-size: 12.600px; color: #333; }
.navbar { height: 37px; display: flex; align-items: center; padding-left: 746px; background: linear-gradient(#222, #111); border-bottom: 1px solid #252525; color: #999; box-shadow: 0 1px 9px rgba(0, 0, 0, .1); position: relative; }
.navbar a { display: block; }
.brand { width: 178px; font-size: 18px; }
main { margin: -1px 0 0 746px; width: 1053px; }
h1 { margin: 0 0 8px; font-size: 28.350px; line-height: 36px; font-weight: bold; white-space: nowrap; letter-spacing: .12px; }
.frame + h1 { margin-top: 55px; }
.frame { border: 1px solid #ddd; border-radius: 4px; overflow: hidden; }
table { width: 1051px; table-layout: fixed; border-spacing: 0; border-collapse: separate; }
th, td { height: 33px; padding: 0 0 0 7px; border-left: 1px solid #ddd; border-top: 1px solid #ddd; text-align: left; vertical-align: middle; line-height: 18px; white-space: nowrap; }
tr:first-child > * { border-top: 0; height: 32px; }
th:first-child, td:first-child { border-left: 0; }
.odd > * { background: #f9f9f9; }
.odd > .void, .void { background: #fff; border: 0; }
td a { color: #0077bd; letter-spacing: .09px; }
code { display: inline-block; vertical-align: middle; height: 20px; line-height: 18px; padding: 0 2.800px; border: 1px solid; border-radius: 1.500px; font-family: "DejaVu Sans Mono", monospace; font-size: 11.600px; letter-spacing: -.480px; white-space: pre; }
.green { background: #53d000; border-color: #235f00; color: #235800; }
.red { background: #ff8989; border-color: #b40000; color: #a4000c; }
.yellow { background: #ff0; border-color: #6f6f00; color: #5c5c00; }
.plain { background: #f7f7f9; border-color: #e1e1e8; color: #d14; }
.scrollbar { width: 15px; background: linear-gradient(90deg, #e6e6e6, #fafafa 30%, #fff); border-left: 1px solid #e2e2e2; padding: 155px 0 0 3px; }
.scrollbar i { display: block; width: 9px; height: 132px; border-radius: 5px; background: #c1c1c1; }

.downloads { height: 44px; flex: none; display: flex; align-items: flex-start; background: linear-gradient(#e9e9e9, #d9d9d9); border-top: 1px solid #7d7f7d; padding: 4px 9px 0 4px; position: relative; z-index: 1; }
.dl, .showall { height: 32px; border: 1px solid #b5b5b5; border-radius: 3px; background: linear-gradient(#f7f7f7, #e7e7e7); display: flex; align-items: center; }
.dl { width: 206px; padding-left: 11px; }
.name { width: 166px; padding-left: 12px; border-right: 1px solid #c4c4c4; line-height: 28px; }
.caret { border: 3px solid transparent; border-top: 4px solid #000; border-bottom: 0; margin: -3px 0 0 4px; }
.showall { width: 90px; margin-left: auto; padding-left: 14px; gap: 5px; }
.dl-x { width: 19px; text-align: right; font-size: 17px; line-height: 31px; color: #777; }

.dock { height: 91px; flex: none; position: relative; display: flex;
  background:
    linear-gradient(#000, transparent 22px),
    radial-gradient(ellipse 60px 40px at 275px 25px, #6b6142, transparent),
    radial-gradient(ellipse 60px 40px at 320px 25px, #4a1d10, transparent),
    radial-gradient(ellipse 60px 40px at 1440px 22px, #7a5a20, transparent),
    radial-gradient(ellipse 120px 50px at 1240px 30px, #4f4238, transparent),
    radial-gradient(ellipse 40px 40px at 2260px 28px, #4a1d10, transparent),
    radial-gradient(ellipse 70px 40px at 2190px 28px, #83774b, transparent),
    radial-gradient(ellipse 60px 40px at 2310px 28px, #83774b, transparent),
    linear-gradient(90deg, #3a2a10, #2a200f 10%, #3d3319 20%, #332c24 45%, #2e2718 70%, #5f3216 76%, #4a2a14 82%, #3c331b 92%, #2b2612); }
.shelf { position: absolute; left: 0; top: 39px; }
.row { display: flex; padding: 9px 0 0 65.200px; position: relative; }
.row.right { padding-left: 34.500px; }
.tile { width: 68.600px; height: 82px; padding: 0 1.300px; position: relative; flex: none; }
.right .tile { width: 68.450px; }
.tile > svg { width: 66px; height: 66px; overflow: visible; font-family: "Liberation Sans", sans-serif; filter: drop-shadow(0 2px 2px rgba(0, 0, 0, .35)); -webkit-box-reflect: below 0 linear-gradient(transparent 82%, rgba(255, 255, 255, .28)); }
.tile .mono { font-family: "DejaVu Sans Mono", monospace; }
.tile.on::after { content: ""; position: absolute; left: 28px; bottom: 0; width: 12px; height: 3px; background: #f4fdff; box-shadow: 0 0 5px 2px #8fd4f5; border-radius: 1px; }
</style>
